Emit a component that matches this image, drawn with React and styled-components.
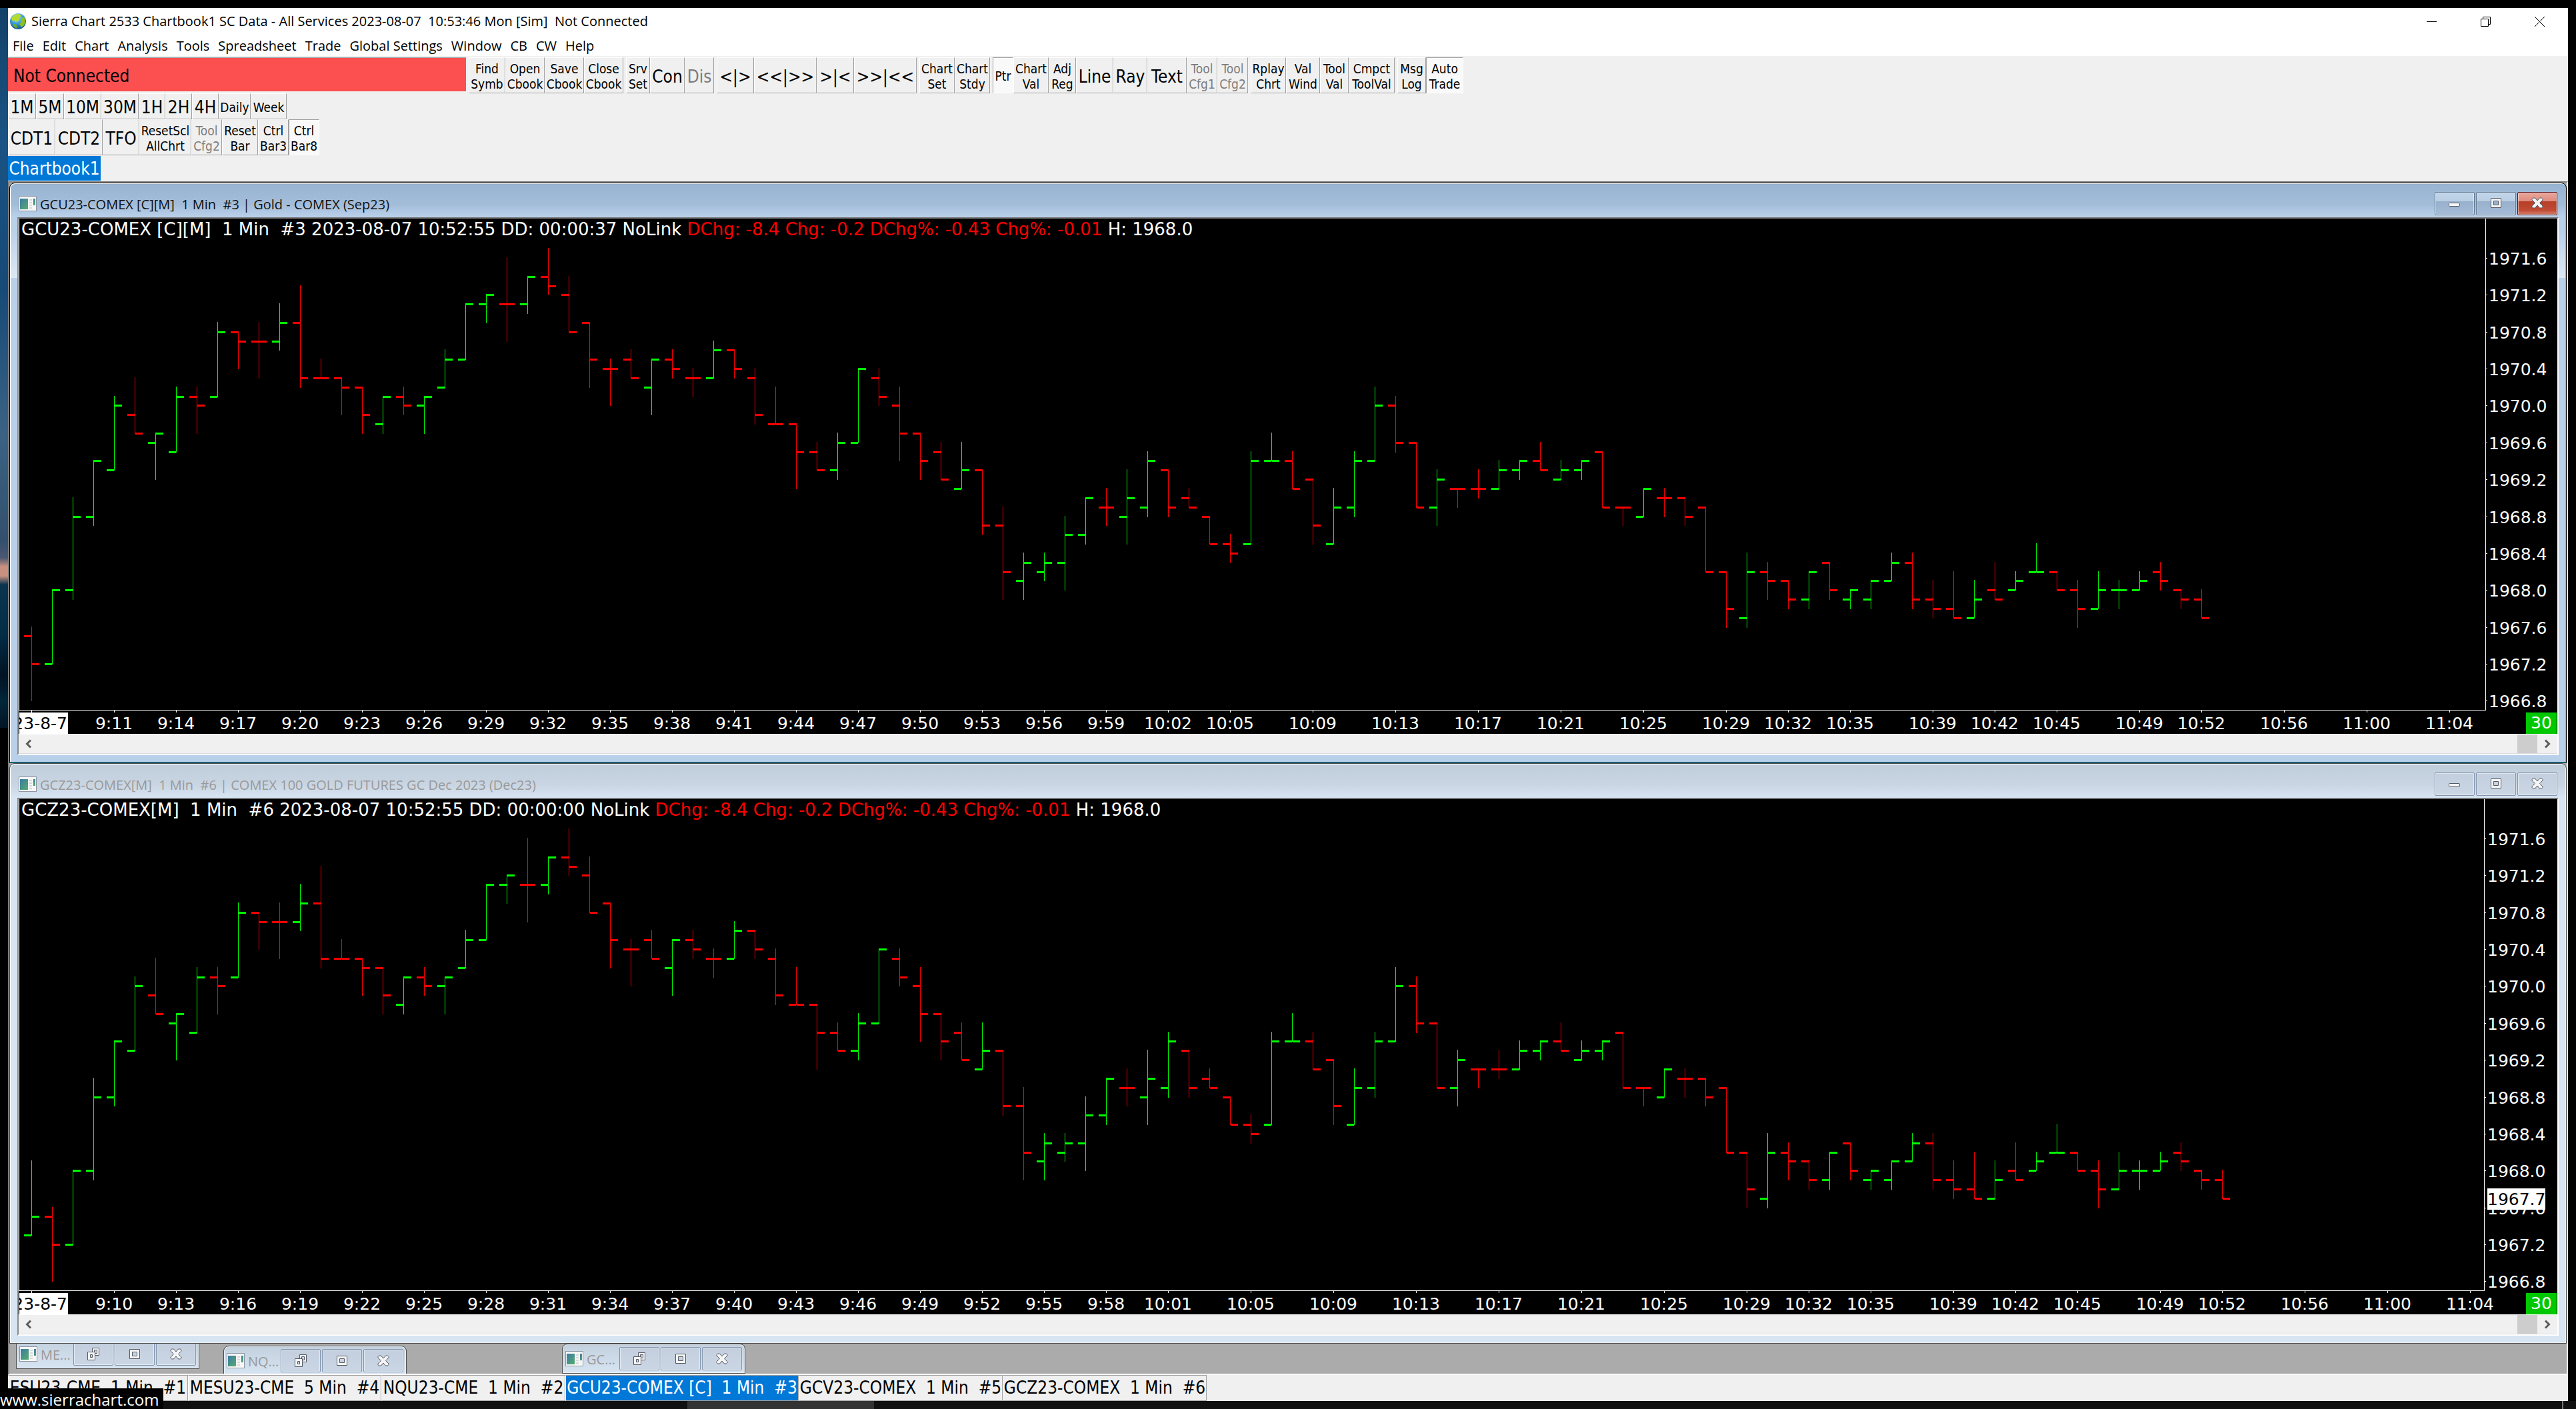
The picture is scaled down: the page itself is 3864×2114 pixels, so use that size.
import React from "react";
import styled, { createGlobalStyle, css } from "styled-components";

const UI_FONT = `"Open Sans", "Noto Sans", sans-serif`;
const TOOL_FONT = `"DejaVu Sans Condensed", "DejaVu Sans", sans-serif`;
const CHART_FONT = `"DejaVu Sans", sans-serif`;

const UP = "#00ff00";
const DOWN = "#ff0000";

const BAR_STEP = 31;
const FIRST_BAR = 18;
const TICK = 13.84;
const TOP_LEVEL = 56;
const TOP_Y = 59;

const MENUS = ["File", "Edit", "Chart", "Analysis", "Tools", "Spreadsheet", "Trade", "Global Settings", "Window", "CB", "CW", "Help"];

const MAIN_GROUPS = [
    [
        { label: "Find\nSymb", w: 55 },
        { label: "Open\nCbook", w: 59 },
        { label: "Save\nCbook", w: 59 },
        { label: "Close\nCbook", w: 59 },
    ],
    [
        { label: "Srv\nSet", w: 36 },
        { label: "Con", w: 52 },
        { label: "Dis", w: 44, disabled: true },
    ],
    [
        { label: "<|>", w: 56 },
        { label: "<<|>>", w: 94 },
        { label: ">|<", w: 56 },
        { label: ">>|<<", w: 94 },
    ],
    [
        { label: "Chart\nSet", w: 53 },
        { label: "Chart\nStdy", w: 53 },
    ],
    [
        { label: "Ptr", w: 31, small: true, pressed: true },
        { label: "Chart\nVal", w: 53 },
        { label: "Adj\nReg", w: 41 },
        { label: "Line", w: 56 },
        { label: "Ray", w: 51 },
        { label: "Text", w: 59 },
        { label: "Tool\nCfg1", w: 46, disabled: true },
        { label: "Tool\nCfg2", w: 46, disabled: true },
    ],
    [
        { label: "Rplay\nChrt", w: 53 },
        { label: "Val\nWind", w: 51 },
        { label: "Tool\nVal", w: 43 },
        { label: "Cmpct\nToolVal", w: 69 },
    ],
    [
        { label: "Msg\nLog", w: 43 },
        { label: "Auto\nTrade", w: 56, pressed: true },
    ],
];

const PERIODS = [
    { label: "1M", w: 42 },
    { label: "5M", w: 42 },
    { label: "10M", w: 56 },
    { label: "30M", w: 56 },
    { label: "1H", w: 40 },
    { label: "2H", w: 40 },
    { label: "4H", w: 40 },
    { label: "Daily", w: 48, small: true },
    { label: "Week", w: 54, small: true },
];

const TOOLS = [
    { label: "CDT1", w: 71 },
    { label: "CDT2", w: 71 },
    { label: "TFO", w: 55 },
    { label: "ResetScl\nAllChrt", w: 78 },
    { label: "Tool\nCfg2", w: 46, disabled: true },
    { label: "Reset\nBar", w: 54 },
    { label: "Ctrl\nBar3", w: 46 },
    { label: "Ctrl\nBar8", w: 46, pressed: true },
];

const TABS = [
    { label: "ESU23-CME  1 Min  #1", w: 270 },
    { label: "MESU23-CME  5 Min  #4", w: 290 },
    { label: "NQU23-CME  1 Min  #2", w: 276 },
    { label: "GCU23-COMEX [C]  1 Min  #3", w: 350, active: true },
    { label: "GCV23-COMEX  1 Min  #5", w: 306 },
    { label: "GCZ23-COMEX  1 Min  #6", w: 306 },
];

    // open, high, low, close in ticks of 0.1 above 1966.0
const BARS = [
    [15, 16, 8, 12], [12, 20, 12, 20], [20, 30, 19, 28], [28, 34, 27, 34], [33, 41, 33, 40],
    [39, 43, 37, 37], [36, 37, 32, 37], [35, 42, 35, 41], [41, 42, 37, 40], [41, 49, 41, 48],
    [48, 48, 44, 47], [47, 49, 43, 47], [47, 51, 46, 49], [49, 53, 42, 43], [43, 45, 43, 43],
    [43, 43, 39, 42], [42, 42, 37, 39], [38, 41, 37, 41], [41, 42, 39, 40], [40, 41, 37, 41],
    [42, 46, 42, 45], [45, 51, 45, 51], [51, 52, 49, 52], [51, 56, 47, 51], [51, 54, 50, 54],
    [54, 57, 52, 53], [52, 54, 48, 48], [49, 49, 42, 45], [44, 45, 40, 44], [45, 46, 43, 43],
    [42, 45, 39, 45], [45, 46, 43, 44], [43, 44, 41, 43], [43, 47, 43, 46], [46, 46, 43, 44],
    [43, 44, 38, 39], [38, 42, 38, 38], [38, 38, 31, 35], [35, 36, 33, 33], [33, 37, 32, 36],
    [36, 44, 36, 44], [43, 44, 40, 41], [40, 42, 34, 37], [37, 37, 32, 34], [35, 36, 32, 32],
    [31, 36, 31, 33], [33, 33, 26, 27], [27, 29, 19, 22], [21, 24, 19, 23], [22, 24, 21, 23],
    [23, 28, 20, 26], [26, 30, 25, 30], [29, 31, 27, 29], [28, 33, 25, 30], [29, 35, 28, 34],
    [33, 33, 28, 29], [30, 31, 29, 29], [28, 28, 25, 25], [25, 26, 23, 24], [25, 35, 25, 34],
    [34, 37, 34, 34], [34, 35, 31, 31], [32, 32, 25, 27], [25, 31, 25, 29], [29, 35, 28, 34],
    [34, 42, 34, 40], [40, 41, 35, 36], [36, 36, 29, 29], [29, 33, 27, 32], [31, 31, 29, 31],
    [31, 33, 30, 31], [31, 34, 31, 33], [33, 34, 32, 34], [34, 36, 33, 33], [32, 34, 32, 33],
    [33, 34, 32, 34], [35, 35, 29, 29], [29, 29, 27, 29], [28, 31, 28, 31], [30, 31, 28, 30],
    [30, 30, 27, 28], [29, 29, 22, 22], [22, 22, 16, 18], [17, 24, 16, 22], [22, 23, 19, 21],
    [21, 21, 18, 19], [19, 22, 18, 22], [23, 23, 19, 20], [19, 20, 18, 20], [19, 21, 18, 21],
    [21, 24, 21, 23], [23, 24, 18, 19], [19, 21, 17, 18], [18, 22, 17, 17], [17, 21, 17, 19],
    [20, 23, 19, 19], [20, 22, 20, 21], [22, 25, 22, 22], [22, 22, 20, 20], [20, 21, 16, 18],
    [18, 22, 18, 20], [20, 21, 18, 20], [20, 22, 20, 21], [22, 23, 20, 21], [20, 20, 18, 19],
    [19, 20, 17, 17],
];

const FLAT_UP = [[34, 37, 34, 34], [22, 25, 22, 22], [20, 21, 18, 20]].map(String);

const EARLY_LABELS = Array.from({ length: 18 }, (_, i) => 4 + i * 3);

const CHARTS = [
    {
        title: "GCU23-COMEX [C][M]  1 Min  #3 | Gold - COMEX (Sep23)",
        head: "GCU23-COMEX [C][M]  1 Min  #3 2023-08-07 10:52:55 DD: 00:00:37 NoLink ",
        active: true,
        start: 9 * 60 + 7,
        axisWidth: 107,
        bars: BARS,
        labels: [...EARLY_LABELS, 58, 62, 66, 70, 74, 78, 82, 85, 88, 92, 95, 98, 102, 105, 109, 113, 117],
    },
    {
        title: "GCZ23-COMEX[M]  1 Min  #6 | COMEX 100 GOLD FUTURES GC Dec 2023 (Dec23)",
        head: "GCZ23-COMEX[M]  1 Min  #6 2023-08-07 10:52:55 DD: 00:00:00 NoLink ",
        active: false,
        start: 9 * 60 + 6,
        axisWidth: 109,
        bars: [[13, 21, 13, 15], ...BARS],
        labels: [...EARLY_LABELS, 59, 63, 67, 71, 75, 79, 83, 86, 89, 93, 96, 99, 103, 106, 110, 114, 118],
        last: 17,
    },
];

const barX = (i) => FIRST_BAR + i * BAR_STEP;
const levelY = (level) => Math.round(TOP_Y + (TOP_LEVEL - level) * TICK);
const price = (level) => (1966 + level / 10).toFixed(1);
const clock = (min) => `${Math.floor(min / 60)}:${String(min % 60).padStart(2, "0")}`;

function AppIcon() {
    return (
        <svg width="26" height="26" viewBox="0 0 26 26" aria-hidden="true">
            <defs>
                <radialGradient id="globe" cx="0.4" cy="0.25" r="0.8">
                    <stop offset="0" stopColor="#b9ecff" />
                    <stop offset="0.5" stopColor="#3a9bd8" />
                    <stop offset="1" stopColor="#0d4c86" />
                </radialGradient>
            </defs>
            <circle cx="13" cy="13" r="12" fill="url(#globe)" />
            <path d="M3 8 Q8 1 15 2 L18 5 L14 8 L15 11 L10 14 L8 12 L5 13 Z" fill="#b5dc2c" />
            <path d="M17 9 L22 6 Q26 13 22 19 L18 22 L15 17 L18 14 Z" fill="#8cc21f" />
            <path d="M5 17 L10 17 L12 24 Q7 22 5 17 Z" fill="#6fae1c" />
        </svg>
    );
}

function ChartIcon() {
    return (
        <svg width="27" height="23" viewBox="0 0 27 23" aria-hidden="true">
            <defs>
                <linearGradient id="chartIcon" x1="0" y1="0" x2="1" y2="1">
                    <stop offset="0" stopColor="#3f78a6" />
                    <stop offset="1" stopColor="#54ad6c" />
                </linearGradient>
            </defs>
            <rect x="0.5" y="0.5" width="26" height="22" fill="#f6f6f6" stroke="#8c97a3" />
            <rect x="2" y="4" width="12" height="16" fill="url(#chartIcon)" />
            <path d="M16 6h4M16 10h4M16 14h4M16 18h4" stroke="#b9b9b9" strokeWidth="1" />
            <rect x="22" y="4" width="3" height="10" fill="url(#chartIcon)" />
        </svg>
    );
}

function CaptionGlyph({ kind }) {
    return (
        <svg width="22" height="22" viewBox="0 0 22 22" fill="#f4f4f4" stroke="#555a66" aria-hidden="true">
            {kind === "minimize" && <rect x="2.5" y="10.5" width="16" height="5" rx="1" />}
            {kind === "maximize" && (
                <path fillRule="evenodd" d="M3.5 3.5h15v14h-15z M7.5 7.5v6h7v-6z" />
            )}
            {kind === "restore" && (
                <>
                    <path fillRule="evenodd" d="M9.5 1.5h10v11h-10z M12.5 4.5v5h4v-5z" />
                    <path fillRule="evenodd" d="M2.5 7.5h11v12h-11z M6.5 11.5v4h3v-4z" />
                </>
            )}
            {kind === "close" && (
                <path d="M3 4.5 L4.5 3 H7.5 L11 7 L14.5 3 H17.5 L19 4.5 V6 L14.5 10.5 L19 15 V16.5 L17.5 18 H14.5 L11 14 L7.5 18 H4.5 L3 16.5 V15 L7.5 10.5 L3 6 Z" />
            )}
        </svg>
    );
}

function ToolButtons({ items }) {
    return items.map((b, i) => (
        <ToolButton
            key={i}
            type="button"
            disabled={b.disabled}
            $w={b.w}
            $pressed={b.pressed}
            $small={b.small || b.label.includes("\n")}
        >
            {b.label}
        </ToolButton>
    ));
}

function ChildCaption({ kinds, active }) {
    return (
        <CaptionButtons>
            {kinds.map((kind) => (
                <CaptionButton key={kind} type="button" aria-label={kind} $active={active} $danger={active && kind === "close"}>
                    <CaptionGlyph kind={kind} />
                </CaptionButton>
            ))}
        </CaptionButtons>
    );
}

function Bar({ x, data }) {
    const [o, h, l, c] = data;
    const color = c > o || FLAT_UP.includes(String(data)) ? UP : DOWN;

    return (
        <g fill={color}>
            <rect x={x} y={levelY(h) - 1} width="1" height={levelY(l) - levelY(h) + 2} />
            <rect x={x - 11} y={levelY(o) - 1} width="11" height="3" />
            <rect x={x + 1} y={levelY(c) - 1} width="11" height="3" />
        </g>
    );
}

function ChartWindow({ chart }) {
    const { title, head, active, start, axisWidth, bars, labels, last } = chart;
    const levels = Array.from({ length: 13 }, (_, i) => 56 - i * 4);

    return (
        <ChildWindow $active={active}>
            <ChildTitle>
                <ChartIcon />
                <ChildName $active={active}>{title}</ChildName>
                <ChildCaption kinds={["minimize", "maximize", "close"]} active={active} />
            </ChildTitle>

            <Sunken>
                <ChartGrid $axis={axisWidth}>
                    <Plot>
                        <ChartHead>
                            {head}
                            <Loss>DChg: -8.4 Chg: -0.2 DChg%: -0.43 Chg%: -0.01 </Loss>
                            H: 1968.0
                        </ChartHead>
                        <Drawing>
                            {bars.map((b, i) => <Bar key={i} x={barX(i)} data={b} />)}
                        </Drawing>
                    </Plot>

                    <Drawing>
                        {levels.map((level) => (
                            <g key={level} fill="#fff">
                                <rect x="0" y={levelY(level)} width="2" height="1" />
                                <text x="4" y={levelY(level) + 10}>{price(level)}</text>
                            </g>
                        ))}
                        {last && (
                            <>
                                <rect x="4" y={levelY(last) - 15} width="87" height="32" fill="#fff" />
                                <text x="4" y={levelY(last) + 10} fill="#000">{price(last)}</text>
                            </>
                        )}
                    </Drawing>

                    <TimeAxis>
                        <rect x="19" y="0" width="1" height="3" fill="#fff" />
                        <rect x="1" y="3" width="73" height="32" fill="#fff" />
                        <text x="73" y="28" textAnchor="end">2023-8-7</text>
                        {labels.map((i) => (
                            <g key={i} fill="#fff">
                                <rect x={barX(i) + 1} y="0" width="1" height="3" />
                                <text x={barX(i) + 1} y="28" textAnchor="middle">{clock(start + i)}</text>
                            </g>
                        ))}
                    </TimeAxis>

                    <Corner><Countdown>30</Countdown></Corner>
                </ChartGrid>

                <ScrollBar>
                    <ScrollArrow type="button" aria-label="Scroll left">
                        <svg width="12" height="14" viewBox="0 0 12 14"><path d="M9 1.5 L3.5 7 L9 12.5" /></svg>
                    </ScrollArrow>
                    <ScrollThumb />
                    <ScrollArrow type="button" aria-label="Scroll right">
                        <svg width="12" height="14" viewBox="0 0 12 14"><path d="M3 1.5 L8.5 7 L3 12.5" /></svg>
                    </ScrollArrow>
                </ScrollBar>
            </Sunken>
        </ChildWindow>
    );
}

export default function App() {
    return (
        <>
            <GlobalStyle />
            <Desktop>
                <Workspace>
                    <Wallpaper />

                    <MainWindow>
                        <TitleBar>
                            <AppIcon />
                            <AppTitle>Sierra Chart 2533 Chartbook1 SC Data - All Services 2023-08-07  10:53:46 Mon [Sim]  Not Connected</AppTitle>
                            <SystemButton type="button" aria-label="Minimize">
                                <svg width="15" height="15"><path d="M0 7.5H15" /></svg>
                            </SystemButton>
                            <SystemButton type="button" aria-label="Restore">
                                <svg width="15" height="15"><path d="M0.5 3.5H11.5V14.5H0.5Z M3.5 3V0.5H14.5V11.5H12" /></svg>
                            </SystemButton>
                            <SystemButton type="button" aria-label="Close">
                                <svg width="15" height="15"><path d="M0 0L15 15M15 0L0 15" /></svg>
                            </SystemButton>
                        </TitleBar>

                        <MenuBar>
                            {MENUS.map((m) => <MenuItem key={m} type="button">{m}</MenuItem>)}
                        </MenuBar>

                        <ToolArea>
                            <ToolRow $tall $gap={4}>
                                <ConnectionState>Not Connected</ConnectionState>
                                {MAIN_GROUPS.map((items, i) => (
                                    <ToolGroup key={i}><ToolButtons items={items} /></ToolGroup>
                                ))}
                            </ToolRow>
                            <ToolRow><ToolButtons items={PERIODS} /></ToolRow>
                            <ToolRow $tall><ToolButtons items={TOOLS} /></ToolRow>
                            <ToolRow><BookTab type="button">Chartbook1</BookTab></ToolRow>
                        </ToolArea>

                        <ChildArea>
                            {CHARTS.map((c) => <ChartWindow key={c.title} chart={c} />)}

                            <Tray>
                                <MinimizedWindow $left={10} $top={-7}>
                                    <ChartIcon />
                                    <ChildName>ME...</ChildName>
                                    <ChildCaption kinds={["restore", "maximize", "close"]} />
                                </MinimizedWindow>
                                <MinimizedWindow $left={321} $top={3}>
                                    <ChartIcon />
                                    <ChildName>NQ...</ChildName>
                                    <ChildCaption kinds={["restore", "maximize", "close"]} />
                                </MinimizedWindow>
                                <MinimizedWindow $left={829} $top={0}>
                                    <ChartIcon />
                                    <ChildName>GC...</ChildName>
                                    <ChildCaption kinds={["restore", "maximize", "close"]} />
                                </MinimizedWindow>
                            </Tray>
                        </ChildArea>

                        <TabBar>
                            {TABS.map((t) => (
                                <Tab key={t.label} type="button" $w={t.w} $active={t.active}>{t.label}</Tab>
                            ))}
                        </TabBar>
                    </MainWindow>
                </Workspace>

                <TaskBar><TaskItem /><ShowDesktop /></TaskBar>
                <LinkTip href="#">www.sierrachart.com</LinkTip>
            </Desktop>
        </>
    );
}

const GlobalStyle = createGlobalStyle`
    * {
        box-sizing: border-box;
    }

    body {
        margin: 0;
        background: #000;
    }

    button {
        margin: 0;
        padding: 0;
        border: 0;
        background: none;
        color: #000;
        font-family: inherit;
    }

    svg {
        flex-shrink: 0;
    }
`;

const Desktop = styled.div`
    position: relative;
    padding-top: 12px;
    overflow: hidden;
`;

const Workspace = styled.div`
    display: grid;
    grid-template-columns: 12px minmax(0, 1fr);
    padding-right: 12px;
`;

const Wallpaper = styled.div`
    height: 1080px;
    background: linear-gradient(
        #134268 0,
        #1a5384 200px,
        #164a77 420px,
        #3b6284 640px,
        #33506e 800px,
        #4c5872 825px,
        #c8917f 838px,
        #c8917f 852px,
        #0a344f 865px,
        #032c47 940px,
        #001322 1000px,
        #02263a 1040px,
        #011524 1080px
    );
`;

const MainWindow = styled.main`
    display: flex;
    flex-direction: column;
    background: #f0f0f0;
    font-family: ${UI_FONT};
    font-size: 20px;
`;

const TitleBar = styled.header`
    display: flex;
    align-items: center;
    height: 40px;
    padding: 0 2px;
    background: #fff;
`;

const AppTitle = styled.h1`
    flex: 1;
    margin: 0;
    padding-left: 7px;
    font-size: 20px;
    font-weight: 400;
    line-height: 42px;
    white-space: pre;
`;

const SystemButton = styled.button`
    display: flex;
    align-items: center;
    justify-content: center;
    width: 81px;
    height: 40px;

    path {
        fill: none;
        stroke: #000;
    }
`;

const MenuBar = styled.nav`
    display: flex;
    gap: 13px;
    height: 32px;
    padding-left: 7px;
    background: #fff;
`;

const MenuItem = styled.button`
    font-size: 20px;
    line-height: 34px;
    white-space: nowrap;
`;

const ToolArea = styled.div`
    padding-top: 2px;
    font-family: ${TOOL_FONT};
`;

const ToolRow = styled.div`
    display: flex;
    gap: ${props => props.$gap || 0}px;
    height: ${props => props.$tall ? 54 : 39}px;
`;

const ToolGroup = styled.div`
    display: flex;
`;

const ConnectionState = styled.div`
    width: 687px;
    height: 51px;
    padding-left: 8px;
    border-top: 1px solid #a0a0a0;
    background: #fc4f50;
    font-size: 26px;
    line-height: 54px;
`;

const pressedBorder = css`
    border-color: #a0a0a0 #fff #fff #a0a0a0;
    background: #f9f9f9;
`;

const ToolButton = styled.button`
    display: flex;
    align-items: center;
    justify-content: center;
    width: ${props => props.$w}px;
    height: 100%;
    padding-top: 3px;
    border: 1px solid;
    border-color: #fff #a0a0a0 #a0a0a0 #fff;
    font-size: ${props => props.$small ? 19 : 26}px;
    line-height: ${props => props.$small ? 23 : 30}px;
    text-align: center;
    white-space: pre;

    ${props => props.$pressed && pressedBorder}

    &:disabled {
        color: #7d7d7d;
    }
`;

const BookTab = styled.button`
    width: 139px;
    height: 37px;
    margin-top: 1px;
    background: #0078d7;
    color: #fff;
    font-size: 26px;
    line-height: 39px;
`;

const ChildArea = styled.section`
    border: 2px solid;
    border-color: #808080 #f0f0f0 #fff #808080;
    background: #ababab;
`;

const ChildWindow = styled.article`
    padding: 0 11px 11px;
    border: 1px solid ${props => props.$active ? "#000" : "#4c4c4c"};
    border-radius: 8px 8px 0 0;
    background: ${props => props.$active
        ? "linear-gradient(#98b4d2 0, #a3bdd9 32px, #b9d0ea 50px, #b9d0ea 70px, #dce9f6 142px, #b9d0ea 142px)"
        : "linear-gradient(#bfcddb 0, #c9d5e2 32px, #d7e4f2 50px)"};
    box-shadow: inset ${props => props.$active ? "-1px -1px 0 #35cbee" : "-1px -1px 0 #e6eef7"}, inset 1px 1px 0 #fff;
`;

const ChildTitle = styled.header`
    display: flex;
    align-items: center;
    height: 51px;
    padding: 9px 2px 0;
`;

const ChildName = styled.h2`
    flex: 1;
    margin: 0;
    padding: 3px 0 0 5px;
    color: ${props => props.$active ? "#111" : "#999"};
    font-size: 20px;
    font-weight: 400;
    line-height: 28px;
    white-space: pre;
`;

const CaptionButtons = styled.div`
    display: flex;
    gap: 2px;
`;

const CaptionButton = styled.button`
    display: flex;
    align-items: center;
    justify-content: center;
    width: 60px;
    height: 35px;
    border: 1px solid ${props => props.$danger ? "#52101b" : props.$active ? "#60768f" : "#8295ad"};
    border-radius: 2px;
    background: ${props => props.$danger
        ? "linear-gradient(#eba79c, #dc8b7d 40%, #b73f28 40%, #c04a33 80%, #d6816d)"
        : props.$active
            ? "linear-gradient(#c2d6ea, #b9cee3 40%, #98b0cb 40%, #a4bcd7)"
            : "linear-gradient(#c3cfde, #cad6e4)"};
    box-shadow: inset 0 0 0 1px rgba(255, 255, 255, 0.45);
`;

const Sunken = styled.div`
    border: 2px solid;
    border-color: #757575 #fff #fff #8c8c8c;
    background: #000;
`;

const ChartGrid = styled.div`
    display: grid;
    grid-template-columns: minmax(0, 1fr) ${props => props.$axis}px;
    grid-template-rows: 738px 35px;
`;

const Plot = styled.div`
    position: relative;
    border: 1px solid #fff;
    border-top: 0;
`;

const Drawing = styled.svg`
    display: block;
    width: 100%;
    height: 100%;
    overflow: hidden;
    font-family: ${CHART_FONT};
    font-size: 25px;
`;

    // runs on under the price column, the last label can reach past the plot
const TimeAxis = styled(Drawing)`
    grid-row: 2;
    grid-column: 1 / -1;
`;

    // sits over the bars in the top left corner
const ChartHead = styled.p`
    position: absolute;
    left: 3px;
    top: 0;
    margin: 0;
    color: #fff;
    font-family: ${CHART_FONT};
    font-size: 26px;
    line-height: 33px;
    white-space: pre;
`;

const Loss = styled.span`
    color: #f00;
`;

const Corner = styled.div`
    display: flex;
    grid-row: 2;
    grid-column: 2;
    justify-content: flex-end;
    padding: 3px 1px 0 0;
`;

const Countdown = styled.div`
    width: 46px;
    height: 32px;
    background: #00c800;
    color: #fff;
    font-family: ${CHART_FONT};
    font-size: 25px;
    line-height: 32px;
    text-align: center;
`;

const ScrollBar = styled.div`
    display: flex;
    align-items: center;
    justify-content: space-between;
    height: 30px;
    border-top: 1px solid #fff;
    border-bottom: 1px solid #dcdcdc;
    background: #f0f0f0;
`;

const ScrollArrow = styled.button`
    display: flex;
    align-items: center;
    justify-content: center;
    width: 30px;
    height: 28px;

    path {
        fill: none;
        stroke: #5c5c5c;
        stroke-width: 3;
    }
`;

const ScrollThumb = styled.div`
    width: 30px;
    height: 28px;
    margin-left: auto;
    background: #cdcdcd;
`;

const Tray = styled.div`
    position: relative;
    height: 45px;
    overflow: hidden;
`;

const MinimizedWindow = styled.div`
    position: absolute;
    left: ${props => props.$left}px;
    top: ${props => props.$top}px;
    display: flex;
    align-items: center;
    width: 275px;
    height: 45px;
    padding: 0 4px;
    border: 1px solid #4c4c4c;
    border-radius: 8px 8px 0 0;
    background: linear-gradient(#c3d0de, #d7e4f2);
    box-shadow: inset 0 0 0 1px #e6eef7;
`;

const TabBar = styled.nav`
    display: flex;
    height: 39px;
    font-family: ${TOOL_FONT};
`;

const Tab = styled.button`
    width: ${props => props.$w}px;
    border: 1px solid;
    border-color: #a0a0a0 #a0a0a0 #a0a0a0 #fff;
    background: ${props => props.$active ? "#0078d7" : "none"};
    color: ${props => props.$active ? "#fff" : "#000"};
    font-size: 26px;
    line-height: 37px;
    white-space: pre;
`;

const TaskBar = styled.footer`
    display: flex;
    justify-content: space-between;
    height: 12px;
    padding: 0 19px 0 1031px;
    background: #101010;
`;

const TaskItem = styled.div`
    width: 280px;
    background: #333;
`;

const ShowDesktop = styled.div`
    width: 2px;
    background: #777;
`;

const LinkTip = styled.a`
    position: absolute;
    left: 0;
    bottom: 0;
    width: 245px;
    height: 31px;
    background: #000;
    color: #fff;
    font-family: ${UI_FONT};
    font-size: 24px;
    line-height: 34px;
    text-decoration: none;
`;
